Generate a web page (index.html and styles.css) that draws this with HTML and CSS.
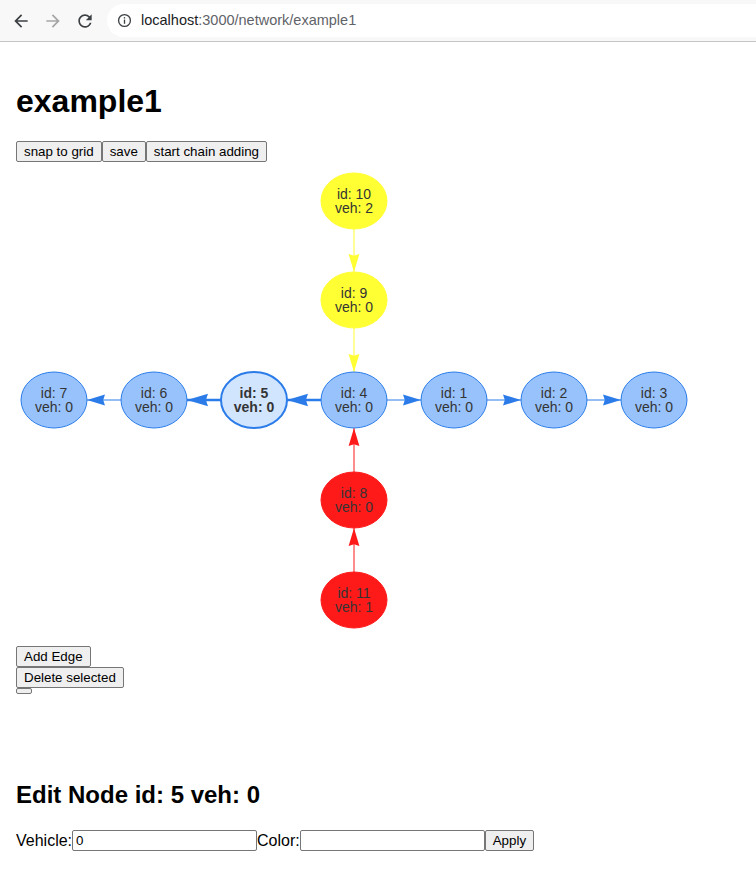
FILE: index.html
```html
<!DOCTYPE html>
<html lang="en">
<head>
  <meta charset="UTF-8" />
  <title>example1</title>
  <meta name="viewport" content="width=device-width, initial-scale=1" />
  <link rel="stylesheet" href="styles.css">
</head>
<body>
  <!-- browser toolbar -->
  <div class="chrome">
    <div class="nav">
      <svg class="nav-icon" viewBox="0 0 24 24"><path fill="#3c4043" d="M20 11H7.83l5.59-5.59L12 4l-8 8 8 8 1.41-1.41L7.83 13H20v-2z"/></svg>
      <svg class="nav-icon" viewBox="0 0 24 24"><path fill="#a6a6a6" d="M4 11h12.17l-5.59-5.59L12 4l8 8-8 8-1.41-1.41L16.17 13H4v-2z"/></svg>
      <svg class="nav-icon" viewBox="0 0 24 24"><path fill="#3c4043" d="M17.65 6.35A7.958 7.958 0 0012 4c-4.42 0-7.99 3.58-7.99 8s3.57 8 7.99 8c3.73 0 6.84-2.550 7.730-6h-2.08A5.99 5.99 0 0112 18c-3.310 0-6-2.69-6-6s2.69-6 6-6c1.66 0 3.14.69 4.220 1.78L13 11h7V4l-2.35 2.35z"/></svg>
    </div>
    <div class="omnibox">
      <svg class="info-icon" viewBox="0 0 16 16">
        <circle cx="8" cy="8" r="6.3" fill="none" stroke="#3c4043" stroke-width="1.4"/>
        <rect x="7.3" y="7" width="1.4" height="4.5" fill="#3c4043"/>
        <rect x="7.3" y="4.4" width="1.4" height="1.5" fill="#3c4043"/>
      </svg>
      <span class="url"><span class="host">localhost</span>:3000/network/example1</span>
    </div>
  </div>

  <div class="page">
    <h1>example1</h1>
    <div class="toolbar"><button>snap to grid</button><button>save</button><button>start chain adding</button></div>

    <div class="network">
      <svg width="724" height="483" viewBox="0 0 724 483">
        <!-- edges -->
        <g class="edges">
          <line x1="338" y1="38" x2="338" y2="137" stroke="#ffff33"/>
          <line x1="338" y1="137" x2="338" y2="237" stroke="#ffff33"/>
          <line x1="338" y1="437" x2="338" y2="337" stroke="#ff1a1a"/>
          <line x1="338" y1="337" x2="338" y2="237" stroke="#ff1a1a"/>
          <line x1="338" y1="237" x2="638" y2="237" stroke="#2b7ce9"/>
          <line x1="38" y1="237" x2="138" y2="237" stroke="#2b7ce9"/>
          <line x1="138" y1="237" x2="338" y2="237" stroke="#2b7ce9" stroke-width="2.6"/>
        </g>
        <!-- arrow heads -->
        <g class="arrows">
          <polygon fill="#ffff33" points="338,109 343.4,91 338,92.8 332.6,91"/>
          <polygon fill="#ffff33" points="338,209 343.4,191 338,192.8 332.6,191"/>
          <polygon fill="#ff1a1a" points="338,265 343.4,283 338,281.2 332.6,283"/>
          <polygon fill="#ff1a1a" points="338,365 343.4,383 338,381.2 332.6,383"/>
          <polygon fill="#2b7ce9" points="405,237 387,231.6 388.8,237 387,242.4"/>
          <polygon fill="#2b7ce9" points="505,237 487,231.6 488.8,237 487,242.4"/>
          <polygon fill="#2b7ce9" points="605,237 587,231.6 588.8,237 587,242.4"/>
          <polygon fill="#2b7ce9" points="71,237 89,231.6 87.2,237 89,242.4"/>
          <polygon fill="#2b7ce9" points="271,237 292,230.7 289.9,237 292,243.3"/>
          <polygon fill="#2b7ce9" points="171,237 192,230.7 189.9,237 192,243.3"/>
        </g>
        <!-- nodes -->
        <g class="node yellow"><ellipse cx="338" cy="38" rx="33" ry="28"/><text x="338" y="35.5">id: 10</text><text x="338" y="49.5">veh: 2</text></g>
        <g class="node yellow"><ellipse cx="338" cy="137" rx="33" ry="28"/><text x="338" y="134.5">id: 9</text><text x="338" y="148.5">veh: 0</text></g>
        <g class="node"><ellipse cx="38" cy="237" rx="33" ry="28"/><text x="38" y="234.5">id: 7</text><text x="38" y="248.5">veh: 0</text></g>
        <g class="node"><ellipse cx="138" cy="237" rx="33" ry="28"/><text x="138" y="234.5">id: 6</text><text x="138" y="248.5">veh: 0</text></g>
        <g class="node selected"><ellipse cx="238" cy="237" rx="33" ry="28"/><text x="238" y="234.5">id: 5</text><text x="238" y="248.5">veh: 0</text></g>
        <g class="node"><ellipse cx="338" cy="237" rx="33" ry="28"/><text x="338" y="234.5">id: 4</text><text x="338" y="248.5">veh: 0</text></g>
        <g class="node"><ellipse cx="438" cy="237" rx="33" ry="28"/><text x="438" y="234.5">id: 1</text><text x="438" y="248.5">veh: 0</text></g>
        <g class="node"><ellipse cx="538" cy="237" rx="33" ry="28"/><text x="538" y="234.5">id: 2</text><text x="538" y="248.5">veh: 0</text></g>
        <g class="node"><ellipse cx="638" cy="237" rx="33" ry="28"/><text x="638" y="234.5">id: 3</text><text x="638" y="248.5">veh: 0</text></g>
        <g class="node red"><ellipse cx="338" cy="337" rx="33" ry="28"/><text x="338" y="334.5">id: 8</text><text x="338" y="348.5">veh: 0</text></g>
        <g class="node red"><ellipse cx="338" cy="437" rx="33" ry="28"/><text x="338" y="434.5">id: 11</text><text x="338" y="448.5">veh: 1</text></g>
      </svg>
    </div>

    <div class="actions">
      <button>Add Edge</button>
      <button>Delete selected</button>
      <button class="empty"></button>
    </div>

    <div class="edit-panel">
      <h2>Edit Node id: 5 veh: 0</h2>
      <div class="edit-form">
        <label>Vehicle:</label><input type="text" value="0"><label>Color:</label><input type="text" value=""><button>Apply</button>
      </div>
    </div>
  </div>
</body>
</html>
```

FILE: styles.css
```css
body {
  margin: 0;
  font-family: "Liberation Sans", Arial, sans-serif;
  color: #000;
  background: #fff;
}

/* browser chrome */
.chrome {
  height: 41px;
  border-bottom: 1px solid #c4c4c4;
  background: #f8f8f8;
  display: flex;
  align-items: flex-start;
}
.nav {
  display: flex;
  gap: 12px;
  padding: 11px 0 0 11px;
  width: 96px;
}
.nav-icon {
  width: 20px;
  height: 20px;
}
.omnibox {
  flex: 1;
  margin-top: 4px;
  height: 33px;
  background: #fff;
  border-radius: 17px 0 0 17px;
  display: flex;
  align-items: center;
  padding-left: 10px;
}
.info-icon {
  width: 15px;
  height: 15px;
  margin-right: 9px;
}
.url {
  font-size: 14.5px;
  color: #5f6368;
  position: relative;
  top: -1px;
}
.url .host {
  color: #202124;
}

/* page */
.page {
  padding: 20px 16px 0;
}
h1 {
  font-size: 32px;
  line-height: 37px;
  margin: 21px 0 21px;
}
button {
  font-family: "Liberation Sans", Arial, sans-serif;
  font-size: 13.333px;
  line-height: 15px;
  padding: 2px 7px;
  border: 1px solid #767676;
  border-radius: 2px;
  background: #efefef;
  color: #000;
  margin: 0;
}
.toolbar {
  display: flex;
}

.network {
  padding-top: 1px;
  height: 483px;
}
.network svg {
  display: block;
}
.node ellipse {
  fill: #97c2fc;
  stroke: #2b7ce9;
  stroke-width: 1;
}
.node text {
  font-family: "Liberation Sans", Arial, sans-serif;
  font-size: 14px;
  fill: #343434;
  text-anchor: middle;
}
.node.selected ellipse {
  fill: #d2e5ff;
  stroke-width: 2;
}
.node.selected text {
  font-weight: bold;
}
.node.yellow ellipse {
  fill: #ffff33;
  stroke: #ffff33;
}
.node.red ellipse {
  fill: #ff1a1a;
  stroke: #ff1a1a;
}

.actions {
  display: flex;
  flex-direction: column;
  align-items: flex-start;
}
.actions button.empty {
  width: 16px;
  height: 6px;
  padding: 0;
  border-width: 1px;
}

.edit-panel {
  padding-top: 87px;
}
h2 {
  font-size: 24px;
  line-height: 28px;
  margin: 0 0 21px;
}
.edit-form {
  display: flex;
  align-items: center;
  height: 21px;
}
.edit-form label {
  font-size: 16px;
}
.edit-form input {
  width: 185px;
  height: 21px;
  box-sizing: border-box;
  font-family: "Liberation Sans", Arial, sans-serif;
  font-size: 13.333px;
  padding: 1px 3px;
  border: 1px solid #767676;
  border-radius: 2px;
  margin: 0;
}
.edit-form button {
  height: 21px;
}
```
